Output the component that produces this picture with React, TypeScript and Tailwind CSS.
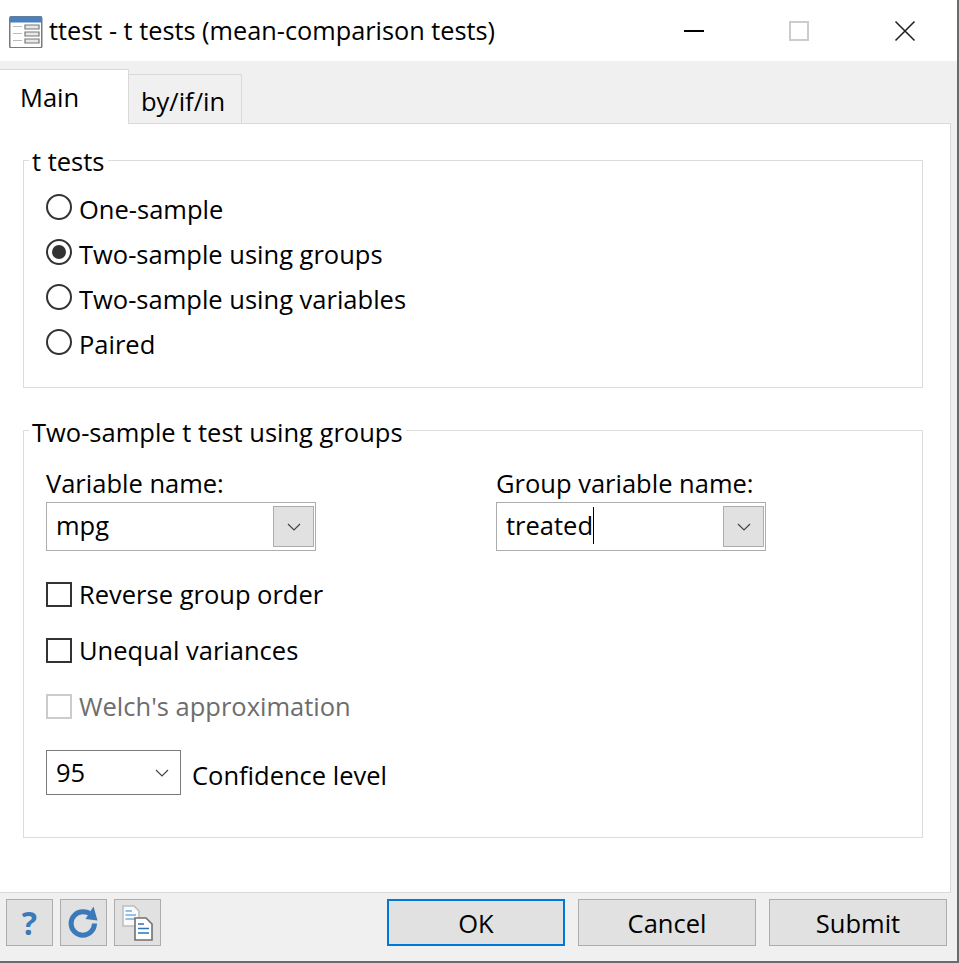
import React from "react";

const font = { fontFamily: '"Open Sans", "Noto Sans", sans-serif' };

function Chevron({ className = "" }: { className?: string }) {
  return (
    <svg width="14" height="8" viewBox="0 0 14 8" className={className}>
      <path d="M1 1 L7 7 L13 1" fill="none" stroke="#444" strokeWidth="1.2" />
    </svg>
  );
}

function Radio({ label, checked }: { label: string; checked?: boolean }) {
  return (
    <div className="flex h-[45px] items-center">
      <span className="flex h-[26px] w-[26px] shrink-0 items-center justify-center rounded-full border-2 border-[#333]">
        {checked && <span className="h-[14px] w-[14px] rounded-full bg-[#333]" />}
      </span>
      <span className="ml-[7px] pt-[6px] text-[#000]">{label}</span>
    </div>
  );
}

function Check({ label, disabled }: { label: string; disabled?: boolean }) {
  return (
    <div className="flex h-[56px] items-center">
      <span className={`h-[25px] w-[26px] shrink-0 border-2 ${disabled ? "border-[#ccc]" : "border-[#333]"}`} />
      <span className={`ml-[7px] ${disabled ? "text-[#6d6d6d]" : "text-black"}`}>{label}</span>
    </div>
  );
}

function Combo({ value, caret }: { value: string; caret?: boolean }) {
  return (
    <div className="flex h-[49px] w-[270px] items-center border border-[#adadad] bg-white pl-[9px] pr-[1px]">
      <span className="flex flex-1 items-center pb-[2px]">
        {value}
        {caret && <span className="h-[37px] w-[1px] bg-black" />}
      </span>
      <span className="flex h-[41px] w-[41px] items-center justify-center border border-[#adadad] bg-[#e1e1e1]">
        <Chevron />
      </span>
    </div>
  );
}

function Group({ title, className, titleClass, children }: { title: string; className: string; titleClass: string; children: React.ReactNode }) {
  return (
    <div className={`relative w-[900px] border border-[#dcdcdc] ${className}`}>
      <span className={`absolute left-[5px] bg-white px-[3px] leading-[36px] ${titleClass}`}>{title}</span>
      {children}
    </div>
  );
}

function Btn({ label, primary }: { label: string; primary?: boolean }) {
  return (
    <div
      className={`flex h-[47px] w-[178px] items-center justify-center bg-[#e1e1e1] pt-[2px] ${
        primary ? "border-2 border-[#0078d7]" : "border border-[#adadad]"
      }`}
    >
      {label}
    </div>
  );
}

function IconBtn({ children }: { children: React.ReactNode }) {
  return (
    <div className="flex h-[47px] w-[47px] items-center justify-center border border-[#adadad] bg-[#e1e1e1]">
      {children}
    </div>
  );
}

export default function App() {
  return (
    <div style={font} className="flex h-[963px] w-[959px] flex-col overflow-hidden border-b-2 border-r-2 border-[#6b6b6b] bg-[#f0f0f0] text-[25.5px] text-black">
      {/* Title bar */}
      <div className="flex h-[61px] shrink-0 items-center bg-white pl-[9px]">
        <svg width="34" height="34" viewBox="0 0 34 34" className="shrink-0">
          <rect x="0.75" y="2.75" width="32" height="31" rx="1.5" fill="#fff" stroke="#7a7a7a" strokeWidth="1.5" />
          <rect x="1" y="2.5" width="32" height="6" fill="#4a80bd" />
          <path d="M4 12.5H13M4 19.5H13M4 26.5H13" stroke="#bbb" strokeWidth="1.2" />
          <path d="M16 11H30V15H16ZM16 18H30V22H16ZM16 25H30V29H16Z" fill="#e8e8e8" stroke="#777" strokeWidth="1.2" />
        </svg>
        <span className="ml-[6px] flex-1 whitespace-nowrap text-[25.3px]">ttest - t tests (mean-comparison tests)</span>
        <div className="flex w-[273px] items-center">
          <span className="h-[2px] w-[20px] bg-black" />
          <span className="ml-[85px] h-[20px] w-[20px] border-2 border-[#ccc]" />
          <svg width="22" height="22" viewBox="0 0 22 22" className="ml-[85px]">
            <path d="M1.5 1.5 L20.5 20.5 M20.5 1.5 L1.5 20.5" stroke="#222" strokeWidth="1.6" />
          </svg>
        </div>
      </div>

      {/* Tabs */}
      <div className="flex h-[62px] shrink-0 items-end">
        <div className="z-10 mb-[-1px] flex h-[55px] w-[129px] items-start border-r border-t border-[#d9d9d9] bg-white pl-[20px] pt-[8px]">
          Main
        </div>
        <div className="flex h-[49px] w-[113px] items-start justify-center border-r border-t border-[#d9d9d9] bg-[#f0f0f0] pr-[4px] pt-[7px]">
          by/if/in
        </div>
      </div>

      {/* Panel */}
      <div className="h-[770px] w-[951px] shrink-0 border-r border-t border-b border-[#d9d9d9] bg-white pl-[23px] pt-[36px]">
        <Group title="t tests" titleClass="top-[-18px]" className="h-[228px] pl-[22px] pt-[23px]">
          <Radio label="One-sample" />
          <Radio label="Two-sample using groups" checked />
          <Radio label="Two-sample using variables" />
          <Radio label="Paired" />
        </Group>

        <Group title="Two-sample t test using groups" titleClass="top-[-17px]" className="mt-[42px] h-[408px] pl-[22px] pt-[32px]">
          <div className="flex gap-[180px]">
            <div className="flex flex-col">
              <span className="h-[39px] leading-[41px]">Variable name:</span>
              <Combo value="mpg" />
            </div>
            <div className="flex flex-col">
              <span className="h-[39px] leading-[41px]">Group variable name:</span>
              <Combo value="treated" caret />
            </div>
          </div>
          <div className="mt-[15px] flex flex-col">
            <Check label="Reverse group order" />
            <Check label="Unequal variances" />
            <Check label="Welch's approximation" disabled />
          </div>
          <div className="mt-[16px] flex items-center">
            <div className="flex h-[45px] w-[135px] items-center justify-between border border-[#7a7a7a] bg-white pl-[9px] pr-[11px]">
              <span>95</span>
              <Chevron />
            </div>
            <span className="ml-[11px] pt-[6px]">Confidence level</span>
          </div>
        </Group>
      </div>

      {/* Footer */}
      <div className="flex flex-1 items-start pl-[6px] pr-[10px] pt-[6px]">
        <div className="flex gap-[7px]">
          <IconBtn>
            <span className="text-[32px] font-bold leading-none text-[#3a7ab8]">?</span>
          </IconBtn>
          <IconBtn>
            <svg width="32" height="34" viewBox="0 0 32 34">
              <path d="M26.5 17.5A11.7 11.7 0 1 1 14.8 5.8Q20 5.8 23 8.5" fill="none" stroke="#3a7ab8" strokeWidth="5" />
              <path d="M25.5 0.5 L29.5 14.5 L17.5 13 Z" fill="#3a7ab8" />
            </svg>
          </IconBtn>
          <IconBtn>
            <svg width="32" height="36" viewBox="0 0 32 36">
              <path d="M1 1H12L17 6V21H1Z" fill="#fafafa" stroke="#bdbdbd" strokeWidth="1.5" />
              <path d="M3.5 6H10M3.5 10H14M3.5 14H14" stroke="#74aee0" strokeWidth="1.6" />
              <path d="M13 13H24L30 19V35H13Z" fill="#fff" stroke="#707070" strokeWidth="1.6" />
              <path d="M16 19H22M16 23.5H27M16 28H27" stroke="#2e73b5" strokeWidth="1.7" />
            </svg>
          </IconBtn>
        </div>
        <div className="ml-auto flex gap-[13px]">
          <Btn label="OK" primary />
          <Btn label="Cancel" />
          <Btn label="Submit" />
        </div>
      </div>
    </div>
  );
}
